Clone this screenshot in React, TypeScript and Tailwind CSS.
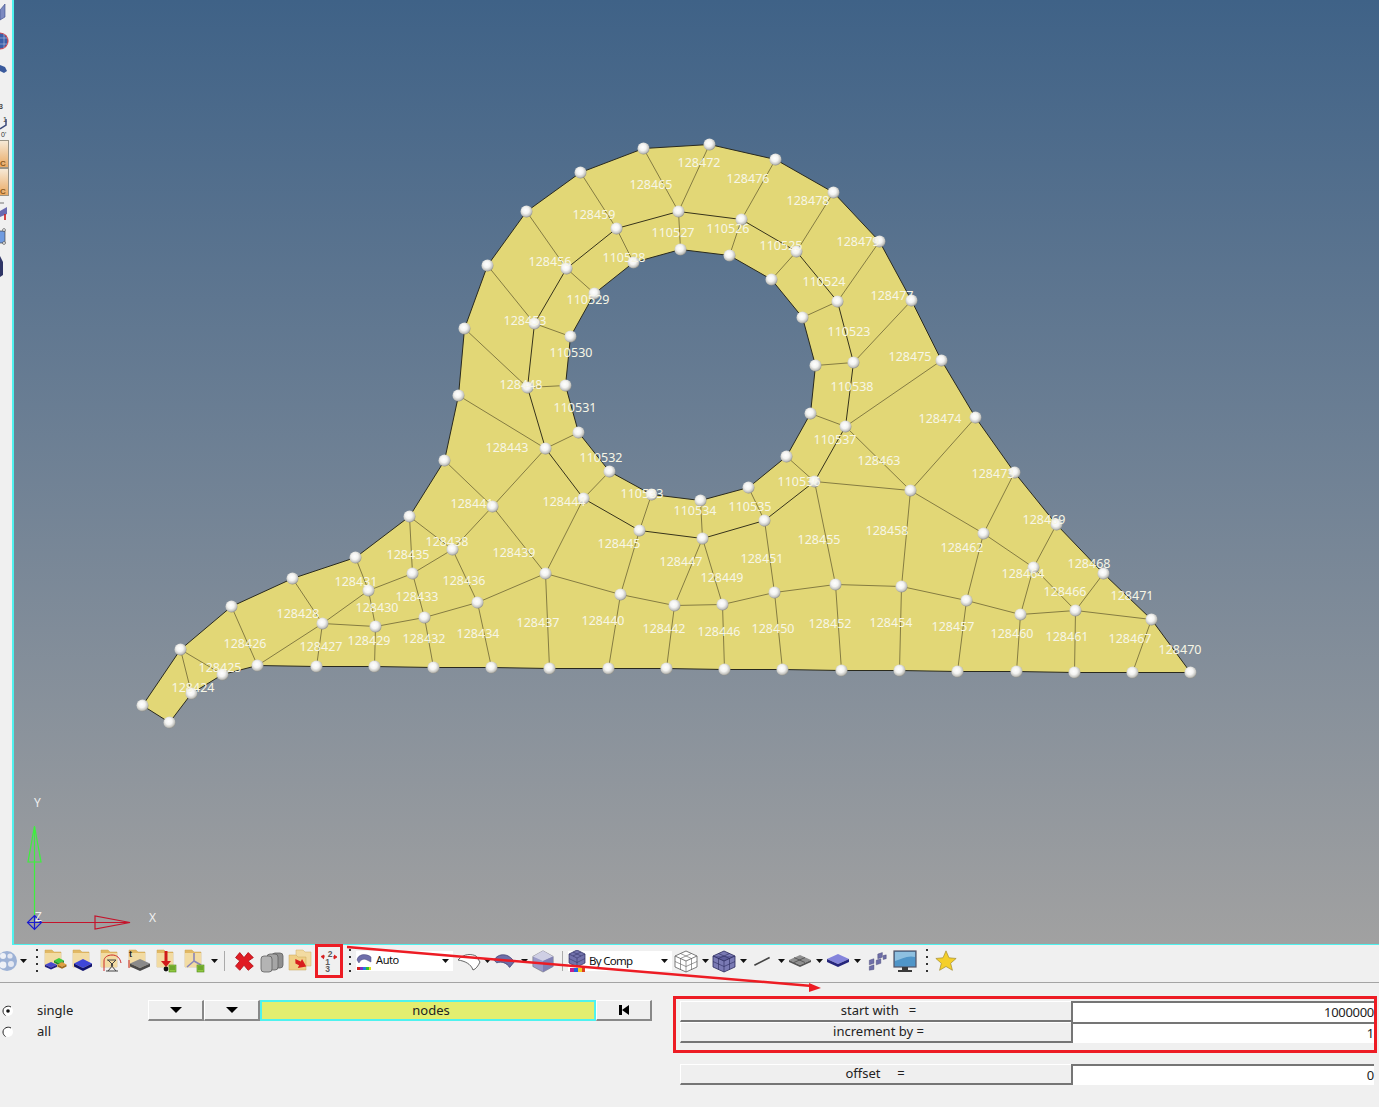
import type { ReactNode } from "react";

const outline =
  "M142 705L169 722L191 693L222 674L257 665L316 666L374 666L433 667L491 667L549 668L608 668L666 668L724 669L782 669L841 670L899 670L957 671L1016 671L1074 672L1132 672L1190 672L1151 619L1103 573L1056 524L1014 472L975 417L941 360L911 300L879 241L833 192L775 159L709 144L643 148L580 172L526 211L487 265L464 328L458 395L444 460L409 516L355 557L292 578L231 606L180 649Z";
const hole =
  "M565 385L570 336L594 293L633 262L680 249L729 255L771 279L802 317L815 365L810 413L786 456L748 487L700 500L651 494L609 471L578 432Z";
const ring =
  "M678 211L741 219L796 251L837 301L853 362L845 426L814 481L764 520L702 538L639 530L583 498L545 448L527 387L534 323L566 268L616 228Z";

const edges = [
  [180, 649, 191, 693], [180, 649, 222, 674], [231, 606, 257, 665], [257, 665, 322, 623], [292, 578, 322, 623],
  [322, 623, 316, 666], [322, 623, 375, 626], [322, 623, 368, 590], [355, 557, 368, 590], [368, 590, 412, 573],
  [368, 590, 375, 626], [375, 626, 374, 666], [375, 626, 424, 617], [412, 573, 424, 617], [412, 573, 452, 549],
  [409, 516, 412, 573], [409, 516, 452, 549], [424, 617, 433, 667], [424, 617, 477, 602], [452, 549, 477, 602],
  [477, 602, 491, 667], [477, 602, 545, 573], [452, 549, 492, 506], [492, 506, 545, 573], [444, 460, 492, 506],
  [492, 506, 545, 448], [458, 395, 545, 448], [583, 498, 545, 573], [545, 573, 549, 668], [545, 573, 620, 594],
  [620, 594, 608, 668], [620, 594, 639, 530], [620, 594, 674, 605], [674, 605, 666, 668], [674, 605, 702, 538],
  [674, 605, 722, 604], [722, 604, 724, 669], [722, 604, 702, 538], [722, 604, 774, 592], [774, 592, 782, 669],
  [774, 592, 764, 520], [774, 592, 835, 584], [835, 584, 841, 670], [835, 584, 814, 481], [835, 584, 901, 586],
  [901, 586, 899, 670], [901, 586, 910, 490], [901, 586, 966, 600], [966, 600, 957, 671], [966, 600, 983, 533],
  [966, 600, 1020, 614], [1020, 614, 1016, 671], [1020, 614, 1033, 567], [1020, 614, 1075, 610], [1075, 610, 1074, 672],
  [1075, 610, 1033, 567], [1075, 610, 1103, 573], [1075, 610, 1151, 619], [1151, 619, 1132, 672], [1033, 567, 1056, 524],
  [1033, 567, 983, 533], [983, 533, 1014, 472], [983, 533, 910, 490], [910, 490, 975, 417], [910, 490, 845, 426],
  [910, 490, 814, 481], [845, 426, 941, 360], [853, 362, 911, 300], [837, 301, 879, 241], [796, 251, 833, 192],
  [741, 219, 775, 159], [678, 211, 709, 144], [678, 211, 643, 148], [616, 228, 580, 172], [566, 268, 526, 211],
  [534, 323, 487, 265], [527, 387, 464, 328], [678, 211, 680, 249], [741, 219, 729, 255], [796, 251, 771, 279],
  [837, 301, 802, 317], [853, 362, 815, 365], [845, 426, 810, 413], [814, 481, 786, 456], [764, 520, 748, 487],
  [702, 538, 700, 500], [639, 530, 651, 494], [583, 498, 609, 471], [545, 448, 578, 432], [527, 387, 565, 385],
  [534, 323, 570, 336], [566, 268, 594, 293], [616, 228, 633, 262],
];

const nodes = [
  [142, 705], [169, 722], [191, 693], [222, 674], [257, 665], [316, 666], [374, 666], [433, 667], [491, 667], [549, 668],
  [608, 668], [666, 668], [724, 669], [782, 669], [841, 670], [899, 670], [957, 671], [1016, 671], [1074, 672], [1132, 672],
  [1190, 672], [1151, 619], [1103, 573], [1056, 524], [1014, 472], [975, 417], [941, 360], [911, 300], [879, 241], [833, 192],
  [775, 159], [709, 144], [643, 148], [580, 172], [526, 211], [487, 265], [464, 328], [458, 395], [444, 460], [409, 516],
  [355, 557], [292, 578], [231, 606], [180, 649], [565, 385], [570, 336], [594, 293], [633, 262], [680, 249], [729, 255],
  [771, 279], [802, 317], [815, 365], [810, 413], [786, 456], [748, 487], [700, 500], [651, 494], [609, 471], [578, 432],
  [678, 211], [741, 219], [796, 251], [837, 301], [853, 362], [845, 426], [814, 481], [764, 520], [702, 538], [639, 530],
  [583, 498], [545, 448], [527, 387], [534, 323], [566, 268], [616, 228], [492, 506], [452, 549], [412, 573], [368, 590],
  [322, 623], [375, 626], [424, 617], [477, 602], [545, 573], [620, 594], [674, 605], [722, 604], [774, 592], [835, 584],
  [901, 586], [966, 600], [1020, 614], [1075, 610], [1033, 567], [983, 533], [910, 490],
];

const labels: [string, number, number][] = [
  ["128424", 193, 687], ["128425", 220, 667], ["128426", 245, 643], ["128427", 321, 646], ["128428", 298, 613],
  ["128429", 369, 640], ["128430", 377, 607], ["128431", 356, 581], ["128432", 424, 638], ["128433", 417, 596],
  ["128434", 478, 633], ["128435", 408, 554], ["128436", 464, 580], ["128437", 538, 622], ["128438", 447, 541],
  ["128439", 514, 552], ["128440", 603, 620], ["128441", 472, 503], ["128442", 664, 628], ["128443", 507, 447],
  ["128444", 564, 501], ["128445", 619, 543], ["128446", 719, 631], ["128447", 681, 561], ["128448", 521, 384],
  ["128449", 722, 577], ["128450", 773, 628], ["128451", 762, 558], ["128452", 830, 623], ["128453", 525, 320],
  ["128454", 891, 622], ["128455", 819, 539], ["128456", 550, 261], ["128457", 953, 626], ["128458", 887, 530],
  ["128459", 594, 214], ["128460", 1012, 633], ["128461", 1067, 636], ["128462", 962, 547], ["128463", 879, 460],
  ["128464", 1023, 573], ["128465", 651, 184], ["128466", 1065, 591], ["128467", 1130, 638], ["128468", 1089, 563],
  ["128469", 1044, 519], ["128470", 1180, 649], ["128471", 1132, 595], ["128472", 699, 162], ["128473", 993, 473],
  ["128474", 940, 418], ["128475", 910, 356], ["128476", 748, 178], ["128477", 892, 295], ["128478", 808, 200],
  ["128479", 858, 241], ["110523", 849, 331], ["110524", 824, 281], ["110525", 781, 245], ["110526", 728, 228],
  ["110527", 673, 232], ["110528", 624, 257], ["110529", 588, 299], ["110530", 571, 352], ["110531", 575, 407],
  ["110532", 601, 457], ["110533", 642, 493], ["110534", 695, 510], ["110535", 750, 506], ["110536", 799, 481],
  ["110537", 835, 439], ["110538", 852, 386],
];

function Mesh() {
  return (
    <svg viewBox="14 0 1365 944" className="block h-[944px] w-[1365px]">
      <defs>
        <radialGradient id="ball" cx="44%" cy="40%" r="62%">
          <stop offset="0%" stopColor="#ffffff" />
          <stop offset="45%" stopColor="#f3f3f1" />
          <stop offset="78%" stopColor="#c6c6c2" />
          <stop offset="100%" stopColor="#8a8a84" />
        </radialGradient>
      </defs>
      <g transform="translate(0.5 0.5)">
        <path d={outline + hole} fill="#e2d776" fillRule="evenodd" stroke="#2a2a1e" strokeWidth="1" />
        {edges.map(([a, b, c, d], i) => (
          <line key={i} x1={a} y1={b} x2={c} y2={d} stroke="#857c42" strokeWidth="1" />
        ))}
        <path d={ring} fill="none" stroke="#36331b" strokeWidth="1" />
        {nodes.map(([x, y], i) => (
          <circle key={i} cx={x} cy={y} r="6" fill="url(#ball)" />
        ))}
      </g>
      <g fill="#f7f6e6" fontSize="12.5" textAnchor="middle" fontFamily="'Noto Sans', sans-serif">
        {labels.map(([t, x, y]) => (
          <text key={t} x={x} y={y + 4.5}>
            {t}
          </text>
        ))}
      </g>
      {/* global axes */}
      <path d="M34.5 921V826M28 862H41L34.5 826Z" fill="none" stroke="#3df03d" strokeWidth="1.2" />
      <path d="M34 922.5H130M95 916V929L130 922.5Z" fill="none" stroke="#c4142c" strokeWidth="1.2" />
      <path d="M34.5 915.5L41.5 922.5L34.5 929.5L27.5 922.5ZM34.5 915.5V929.5M27.5 922.5H41.5" fill="none" stroke="#1c1cd0" strokeWidth="1.2" />
      <g fill="#f0f0f0" fontSize="12" fontFamily="'Noto Sans', sans-serif">
        <text x="34" y="807">Y</text>
        <text x="149" y="922">X</text>
        <text x="35" y="921">Z</text>
      </g>
    </svg>
  );
}

function LeftStrip() {
  return (
    <div className="w-[12px] shrink-0 overflow-hidden">
      <svg viewBox="0 0 12 290" className="block h-[290px] w-[12px]">
        <defs>
          <linearGradient id="tan" x1="0" y1="0" x2="0" y2="1">
            <stop offset="0%" stopColor="#f6ead8" />
            <stop offset="100%" stopColor="#eaa860" />
          </linearGradient>
        </defs>
        <path d="M0 10L5 4V17L0 20Z" fill="#7d8ac0" stroke="#3a4a88" strokeWidth="0.6" />
        <circle cx="0" cy="41" r="8" fill="#3a5ea8" stroke="#d0444c" strokeWidth="1.2" />
        <path d="M0 38H8M0 44H8M4 33V49" stroke="#c8d4ec" strokeWidth="0.5" />
        <path d="M0 65L5 67L7 71L4 73L0 71Z" fill="#3a5a9c" />
        <text x="-1" y="109" fontSize="7" fill="#444" fontFamily="'Liberation Sans', sans-serif" fontWeight="700">3</text>
        <text x="3" y="122" fontSize="7" fill="#333" fontFamily="'Liberation Sans', sans-serif">1</text>
        <text x="1" y="137" fontSize="7" fill="#333" fontFamily="'Liberation Sans', sans-serif">0'</text>
        <path d="M0 129L6 125V119" fill="none" stroke="#3c4a7c" strokeWidth="1.5" />
        <rect x="-1" y="140.5" width="9.5" height="27" fill="url(#tan)" stroke="#9a9486" />
        <rect x="-1" y="168.5" width="9.5" height="27" fill="url(#tan)" stroke="#9a9486" />
        <text x="0" y="166" fontSize="8" fontWeight="700" fill="#8a5a20" fontFamily="'Liberation Sans', sans-serif">C</text>
        <text x="0" y="194" fontSize="8" fontWeight="700" fill="#8a5a20" fontFamily="'Liberation Sans', sans-serif">C</text>
        <path d="M0 211L7 207V214L0 217Z" fill="#6a6ab0" />
        <path d="M5 214V220" stroke="#cc1a1a" strokeWidth="1.6" />
        <path d="M0 203H4" stroke="#888" strokeWidth="1.2" />
        <rect x="-2" y="231" width="7" height="12" fill="#6f9be0" stroke="#333" strokeWidth="0.6" />
        <circle cx="4" cy="230" r="1.4" fill="#fff" stroke="#333" strokeWidth="0.6" />
        <circle cx="4" cy="243" r="1.4" fill="#fff" stroke="#333" strokeWidth="0.6" />
        <path d="M0 256L3 262V275L0 277Z" fill="#2f3566" />
      </svg>
    </div>
  );
}

function Slot({ w = "w-7", children, className = "" }: { w?: string; children?: ReactNode; className?: string }) {
  return <div className={`flex h-[30px] shrink-0 items-center justify-center ${w} ${className}`}>{children}</div>;
}

function Ico({ children, size = 26 }: { children: ReactNode; size?: number }) {
  return (
    <svg viewBox="0 0 26 26" width={size} height={size} className="block overflow-visible">
      {children}
    </svg>
  );
}

function Folder({ children }: { children?: ReactNode }) {
  return (
    <Ico>
      <path d="M3 2H10L12 4H19V19H3Z" fill="#e2b964" stroke="#c9a658" strokeWidth="0.5" />
      <path d="M3 5H19V19H3Z" fill="#f2dba2" />
      {children}
    </Ico>
  );
}

function Caret() {
  return (
    <Slot w="w-[10px]">
      <svg viewBox="0 0 7 4" width="7" height="4" className="block">
        <path d="M0 0H7L3.5 4Z" fill="#111" />
      </svg>
    </Slot>
  );
}

function Dots() {
  return (
    <Slot w="w-[8px]" className="flex-col gap-[5px]">
      <span className="h-[2px] w-[2px] bg-[#333]" />
      <span className="h-[2px] w-[2px] bg-[#333]" />
      <span className="h-[2px] w-[2px] bg-[#333]" />
      <span className="h-[2px] w-[2px] bg-[#333]" />
    </Slot>
  );
}

function Diamond({ x, y, w, h, d, top, side }: { x: number; y: number; w: number; h: number; d: number; top: string; side: string }) {
  return (
    <g>
      <path d={`M${x} ${y}L${x + w} ${y + h}L${x} ${y + 2 * h}L${x - w} ${y + h}Z`} fill={top} />
      <path d={`M${x - w} ${y + h}L${x} ${y + 2 * h}L${x + w} ${y + h}V${y + h + d}L${x} ${y + 2 * h + d}L${x - w} ${y + h + d}Z`} fill={side} />
    </g>
  );
}

function ListBadge() {
  return (
    <g>
      <rect x="15" y="17" width="7" height="7" fill="#8ec63f" stroke="#4f8a1a" strokeWidth="0.6" />
      <path d="M16 19H21M16 21H21" stroke="#3f7a12" strokeWidth="0.8" />
    </g>
  );
}

function GridCube({ solid }: { solid?: boolean }) {
  const face = solid ? "#7a7ab4" : "#ffffff";
  const top = solid ? "#5e5e9c" : "#ffffff";
  const line = solid ? "#2a2a5c" : "#5a5a5a";
  return (
    <Ico>
      <path d="M13 3L24 8V19L13 24L2 19V8Z" fill={face} stroke={line} strokeWidth="0.8" />
      <path d="M2 8L13 13L24 8" fill={top} stroke={line} strokeWidth="0.8" />
      <path d="M13 13V24M2 13.5L13 18.5L24 13.5M7.5 5.5L18.5 10.5M18.5 5.5L7.5 10.5M7.5 10.5V21.5M18.5 10.5V21.5" fill="none" stroke={line} strokeWidth="0.6" />
    </Ico>
  );
}

function Toolbar() {
  return (
    <div className="flex h-[38px] shrink-0 items-center border-b border-[#a4a4a4] pb-[6px]">
      <Slot w="w-[18px]">
        <svg viewBox="0 0 18 22" width="18" height="22" className="block">
          <circle cx="7" cy="11" r="10" fill="#9db2d6" />
          <circle cx="3" cy="6" r="3" fill="#eef1f7" />
          <circle cx="10" cy="6" r="2.6" fill="#e4e8f2" />
          <circle cx="11" cy="14" r="3" fill="#e4e8f2" />
          <circle cx="3" cy="15" r="3.4" fill="#eef1f7" />
        </svg>
      </Slot>
      <Slot w="w-[11px]"><Caret /></Slot>
      <div className="ml-[4px]"><Dots /></div>
      <Slot>
        <Folder>
          <Diamond x={17} y={10} w={5} h={2.6} d={2} top="#3ecb3e" side="#1f8a2a" />
          <Diamond x={9} y={14} w={6} h={2.8} d={2} top="#4a4ad0" side="#1e1e88" />
          <Diamond x={20} y={14} w={4.5} h={2.4} d={2} top="#e0a040" side="#a06a1c" />
        </Folder>
      </Slot>
      <Slot>
        <Folder>
          <Diamond x={13} y={11} w={9} h={4.5} d={3} top="#3e46d8" side="#10126e" />
        </Folder>
      </Slot>
      <Slot>
        <Folder>
          <path d="M6 23V13C6 9 10 7 14 7C19 7 22 10 23 15" fill="none" stroke="#cc2a2a" strokeWidth="1" />
          <path d="M8 23H20M9 12H18M10 12L15 17L10 23M18 12L13 17L18 23" fill="none" stroke="#444" strokeWidth="1" />
        </Folder>
      </Slot>
      <Slot>
        <Folder>
          <Diamond x={14} y={11} w={10} h={4.5} d={3} top="#8a8a8a" side="#4a4a4a" />
          <text x="3" y="9" fontSize="9" fontWeight="700" fill="#222" fontFamily="'Liberation Sans', sans-serif">t</text>
          <path d="M3 12V20" stroke="#cc2a2a" strokeWidth="1" />
        </Folder>
      </Slot>
      <Slot>
        <Folder>
          <path d="M12 3V14" stroke="#d01a1a" strokeWidth="3" />
          <path d="M7 13H17L12 19Z" fill="#d01a1a" />
          <circle cx="12" cy="21" r="2.4" fill="#111" />
          <ListBadge />
        </Folder>
      </Slot>
      <Slot>
        <Folder>
          <path d="M12 13V5M12 13L5 19M12 13L19 17" stroke="#8a86b8" strokeWidth="1.6" fill="none" />
          <ListBadge />
        </Folder>
      </Slot>
      <Caret />
      <div className="ml-[5px] h-[20px] w-px bg-[#aaa]" />
      <Slot className="ml-[5px]">
        <Ico size={22}>
          <path d="M3 9L8 3L13 9L18 3L24 9L18 13L24 19L18 24L13 18L8 24L3 19L8 13Z" fill="#e01c24" stroke="#b01018" strokeWidth="1" strokeLinejoin="round" />
        </Ico>
      </Slot>
      <Slot>
        <Ico>
          <rect x="13" y="5" width="11" height="15" rx="3" fill="#8f8f8f" stroke="#5f5f5f" strokeWidth="0.8" />
          <rect x="8" y="6" width="11" height="16" rx="3" fill="#a6a6a6" stroke="#5f5f5f" strokeWidth="0.8" />
          <rect x="2" y="8" width="11" height="16" rx="3" fill="#b4b4b4" stroke="#5f5f5f" strokeWidth="0.8" />
        </Ico>
      </Slot>
      <Slot>
        <Ico>
          <path d="M9 2H16L18 4H24V18H9Z" fill="#f2dba2" stroke="#d0ae66" strokeWidth="0.5" />
          <path d="M2 7H9L11 9H19V22H2Z" fill="#f0cf86" stroke="#c9a658" strokeWidth="0.5" />
          <path d="M7 13H13V10L20 15L13 20V17H9Z" fill="#d81e1e" transform="rotate(25 12 15)" />
        </Ico>
      </Slot>
      <div className="ml-px flex h-[34px] w-7 shrink-0 items-center justify-center border-[3px] border-[#ed1c24]">
        <svg viewBox="0 0 22 28" width="22" height="28" className="block">
          <g fontSize="8.5" fontWeight="700" fill="#5c5c5c" textAnchor="middle" fontFamily="'Liberation Sans', sans-serif">
            <text x="12" y="10">2</text>
            <text x="9.5" y="18">1</text>
            <text x="9.5" y="25">3</text>
          </g>
          <path d="M6 12L3 9.5L6 8V9.5M7 9.5L5 11M16 8L19 10L16 12V10M15 10L17 9" fill="#d81e1e" stroke="#d81e1e" strokeWidth="0.8" />
        </svg>
      </div>
      <div className="ml-[3px]"><Dots /></div>
      <div className="ml-[2px] flex h-[20px] w-[97px] shrink-0 items-center bg-white">
        <svg viewBox="0 0 16 20" width="16" height="20" className="block shrink-0">
          <path d="M1 9C2 3 10 2 15 6L15 11L11 9C8 7 4 9 3 12Z" fill="#6e6eaa" stroke="#4a4a7c" strokeWidth="0.5" />
          <rect x="1" y="16" width="3" height="3" fill="#d02020" />
          <rect x="4" y="16" width="3" height="3" fill="#8030c0" />
          <rect x="7" y="16" width="3" height="3" fill="#2080e0" />
          <rect x="10" y="16" width="3" height="3" fill="#30c030" />
          <rect x="13" y="16" width="2" height="3" fill="#e0e020" />
        </svg>
        <span className="ml-[4px] flex-1 text-[11px] tracking-[-0.4px] text-[#111]">Auto</span>
        <Caret />
        <span className="w-[3px]" />
      </div>
      <Slot w="w-[26px]" className="ml-[3px]">
        <Ico>
          <path d="M2 12C8 5 16 6 20 8L24 14C22 18 20 21 17 22C15 16 9 13 2 12Z" fill="#fff" stroke="#555" strokeWidth="0.9" />
        </Ico>
      </Slot>
      <Caret />
      <Slot w="w-[24px]" className="ml-px">
        <Ico size={24}>
          <path d="M1 12C6 4 17 4 23 14L18 20C15 15 9 13 4 15Z" fill="#6e6ea8" stroke="#3c3c6c" strokeWidth="0.8" />
        </Ico>
      </Slot>
      <div className="ml-[2px]"><Caret /></div>
      <Slot>
        <Ico size={24}>
          <path d="M13 2L24 8V19L13 25L2 19V8Z" fill="#9a9ac8" stroke="#6a6a6a" strokeWidth="0.6" />
          <path d="M2 8L13 13L24 8L13 2Z" fill="#cfcfe4" />
          <path d="M13 13V25L24 19V8Z" fill="#8080b4" />
        </Ico>
      </Slot>
      <div className="ml-[5px] h-[20px] w-px bg-[#aaa]" />
      <div className="ml-[5px] flex h-[20px] w-[104px] shrink-0 items-center bg-white">
        <svg viewBox="0 0 18 22" width="18" height="22" className="block shrink-0">
          <path d="M9 0L17 4V13L9 17L1 13V4Z" fill="#7272ac" stroke="#2a2a5c" strokeWidth="0.7" />
          <path d="M1 4L9 8L17 4M9 8V17M5 2L13 6M13 2L5 6M1 8.5L9 12.5L17 8.5" fill="none" stroke="#2a2a5c" strokeWidth="0.5" />
          <rect x="2" y="18" width="4" height="4" fill="#c02090" />
          <rect x="6" y="18" width="4" height="4" fill="#2060e0" />
          <rect x="10" y="18" width="4" height="4" fill="#f0d020" />
          <rect x="14" y="18" width="3" height="4" fill="#e04020" />
        </svg>
        <span className="ml-[3px] flex-1 text-[11.5px] tracking-[-0.7px] text-[#111]">By Comp</span>
        <Caret />
        <span className="w-[3px]" />
      </div>
      <Slot><GridCube /></Slot>
      <Caret />
      <Slot><GridCube solid /></Slot>
      <Caret />
      <Slot>
        <Ico size={18}>
          <path d="M2 19L24 8" stroke="#444" strokeWidth="2.4" />
        </Ico>
      </Slot>
      <Caret />
      <Slot>
        <Ico>
          <Diamond x={13} y={7} w={11} h={5} d={2} top="#8f8f8f" side="#555" />
          <path d="M7 9.5L18 14.5M18 9.5L7 14.5" stroke="#444" strokeWidth="0.7" />
        </Ico>
      </Slot>
      <Caret />
      <Slot>
        <Ico>
          <Diamond x={13} y={6} w={11} h={5} d={3} top="#8484dc" side="#26267c" />
        </Ico>
      </Slot>
      <Caret />
      <Slot className="ml-px">
        <Ico size={20}>
          <path d="M14 4L20 2V8L14 10ZM21 6L25 5V10L21 11ZM3 12L9 10V16L3 18ZM12 12L18 10V16L12 18ZM3 20L9 18V24L3 25Z" fill="#6e6ea8" stroke="#3c3c6c" strokeWidth="0.5" />
        </Ico>
      </Slot>
      <Slot>
        <Ico>
          <rect x="2" y="3" width="22" height="16" fill="#4f95c8" stroke="#556" strokeWidth="1.2" />
          <path d="M3 4H23V9C16 7 9 11 3 13Z" fill="#8ec0e0" />
          <path d="M10 19H16V22H20V24H6V22H10Z" fill="#3a3a3a" />
        </Ico>
      </Slot>
      <div className="ml-[4px]"><Dots /></div>
      <Slot className="ml-px">
        <Ico size={22}>
          <path d="M13 1L16.5 9.2L25 10L18.5 15.7L20.6 24L13 19.5L5.4 24L7.5 15.7L1 10L9.5 9.2Z" fill="#f4cf2a" stroke="#a08a30" strokeWidth="0.8" />
        </Ico>
      </Slot>
    </div>
  );
}

function Radio({ checked, label }: { checked?: boolean; label: string }) {
  return (
    <div className="flex h-[21px] items-center">
      <svg viewBox="0 0 12 12" width="12" height="12" className="ml-[2px] block shrink-0">
        <circle cx="6" cy="6" r="5" fill="#fff" />
        <path d="M9 2C6 0 1 2 1 6C1 8 2 9.5 3.5 10.5" fill="none" stroke="#222" strokeWidth="1" />
        {checked && <circle cx="6" cy="6" r="1.8" fill="#111" />}
      </svg>
      <span className="ml-[23px]">{label}</span>
    </div>
  );
}

function DownTriangle() {
  return <span className="h-0 w-0 border-x-[6px] border-t-[6px] border-x-transparent border-t-black" />;
}

function PanelButton({ children }: { children: ReactNode }) {
  return (
    <button className="flex h-[21px] w-[56px] items-center justify-center border-t border-l border-white border-r-2 border-b-2 border-r-[#888] border-b-[#888] bg-[#efefef]">
      {children}
    </button>
  );
}

function Field({ label, value }: { label: string; value: string }) {
  return (
    <div className="flex h-[21px]">
      <div className="flex w-[391px] items-center justify-center whitespace-pre border-t border-l border-white border-b-2 border-b-[#757575] bg-[#efefef] pl-[5px]">
        {label}
      </div>
      <div className="flex flex-1 items-center justify-end border-t-2 border-l-2 border-[#757575] bg-white tracking-[-0.3px]">
        {value}
      </div>
    </div>
  );
}

function Panel() {
  return (
    <div className="flex flex-1 text-[13px] text-[#222]">
      <div className="flex w-[673px] shrink-0 pt-[17px]">
        <div className="w-[148px] shrink-0">
          <Radio checked label="single" />
          <Radio label="all" />
        </div>
        <div className="flex h-[21px]">
          <PanelButton><DownTriangle /></PanelButton>
          <PanelButton><DownTriangle /></PanelButton>
          <div className="flex w-[336px] items-center justify-center border-2 border-[#4ff2ee] bg-[#e3ee6f] pl-[6px]">nodes</div>
          <PanelButton>
            <span className="h-[10px] w-[3px] bg-black" />
            <span className="h-0 w-0 border-y-[5px] border-r-[7px] border-y-transparent border-r-black" />
          </PanelButton>
        </div>
      </div>
      <div className="w-[704px] shrink-0 pt-[13px]">
        <div className="border-[3px] border-[#ed1c24] pt-[2px] pb-[7px] pl-[4px]">
          <Field label="start with   =" value="1000000" />
          <Field label="increment by =" value="1" />
        </div>
        <div className="mt-[11px] mr-[3px] ml-[7px]">
          <Field label="offset     =  " value="0" />
        </div>
      </div>
    </div>
  );
}

export default function App() {
  return (
    <div
      className="relative flex h-[1107px] w-[1379px] flex-col overflow-hidden bg-[#f0f0f0]"
      style={{ fontFamily: "'Noto Sans', sans-serif" }}
    >
      <div className="flex h-[945px] shrink-0">
        <LeftStrip />
        <div className="h-[945px] w-[1367px] border-b border-l-2 border-[#4ff2ee] bg-gradient-to-b from-[#3f6287] to-[#a1a1a1]">
          <Mesh />
        </div>
      </div>
      <Toolbar />
      <Panel />
      {/* annotation arrow drawn on top of the screenshot */}
      <svg viewBox="0 0 1379 1107" className="pointer-events-none absolute inset-0 h-[1107px] w-[1379px]">
        <path d="M347 947L812 986" stroke="#ed1c24" strokeWidth="2.4" />
        <path d="M821 988L809 983V992Z" fill="#ed1c24" />
      </svg>
    </div>
  );
}
